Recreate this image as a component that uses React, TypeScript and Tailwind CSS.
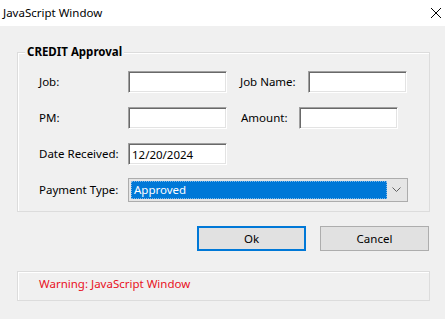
import { useState } from "react";

const inputCls =
  "h-[22px] bg-white border border-t-[#a0a0a0] border-l-[#a0a0a0] border-b-white border-r-white shadow-[inset_1px_1px_0_#696969,inset_-1px_-1px_0_#e3e3e3] px-[3px] text-[11.5px] outline-none text-black";

const App = () => {
  const [job, setJob] = useState("");
  const [jobName, setJobName] = useState("");
  const [pm, setPm] = useState("");
  const [amount, setAmount] = useState("");
  const [date, setDate] = useState("12/20/2024");

  return (
    <div className="w-[445px] h-[319px] bg-[#f0f0f0] text-[11.5px] text-black font-['Noto_Sans',sans-serif] flex flex-col overflow-hidden">
      <div className="h-[26px] bg-white flex items-center justify-between pl-[3px] pr-[3px] shrink-0">
        <span>JavaScript Window</span>
        <svg width="12" height="12" viewBox="0 0 12 12">
          <path d="M1 1 L11 11 M11 1 L1 11" stroke="#000" strokeWidth="1" />
        </svg>
      </div>

      <div className="pl-[17px] pr-[15px] pt-[26px] flex flex-col">
        <div className="relative border border-[#dcdcdc] shadow-[inset_1px_1px_0_#fff] pt-[18px] pb-[9px] pl-[21px] flex flex-col gap-[14px]">
          <span className="absolute left-[7px] top-[-9px] px-[2px] bg-[#f0f0f0] font-bold leading-[16px]">
            CREDIT Approval
          </span>

          <div className="flex items-center">
            <label className="w-[89px]">Job:</label>
            <input className={`${inputCls} w-[99px]`} value={job} onChange={(e) => setJob(e.target.value)} />
            <label className="w-[68px] ml-[13px]">Job Name:</label>
            <input className={`${inputCls} w-[99px]`} value={jobName} onChange={(e) => setJobName(e.target.value)} />
          </div>

          <div className="flex items-center">
            <label className="w-[89px]">PM:</label>
            <input className={`${inputCls} w-[99px]`} value={pm} onChange={(e) => setPm(e.target.value)} />
            <label className="w-[58px] ml-[14px]">Amount:</label>
            <input className={`${inputCls} w-[99px]`} value={amount} onChange={(e) => setAmount(e.target.value)} />
          </div>

          <div className="flex items-center">
            <label className="w-[89px]">Date Received:</label>
            <input className={`${inputCls} w-[99px]`} value={date} onChange={(e) => setDate(e.target.value)} />
          </div>

          <div className="flex items-center mt-[-1px]">
            <label className="w-[89px]">Payment Type:</label>
            <div className="w-[280px] h-[24px] border border-[#acacac] bg-[#e5e5e5] flex items-center p-[2px]">
              <div className="flex-1 h-full bg-[#0078d7] text-white border border-dotted border-[#7fb8e8] flex items-center pl-[2px]">
                Approved
              </div>
              <div className="w-[18px] flex items-center justify-center">
                <svg width="9" height="6" viewBox="0 0 9 6">
                  <path d="M0.5 0.5 L4.5 4.5 L8.5 0.5" fill="none" stroke="#606060" strokeWidth="1" />
                </svg>
              </div>
            </div>
          </div>
        </div>

        <div className="flex justify-end gap-[14px] mt-[14px] pr-[1px]">
          <button className="w-[109px] h-[25px] bg-[#e1e1e1] border-2 border-[#0078d7]">Ok</button>
          <button className="w-[109px] h-[25px] bg-[#e1e1e1] border border-[#adadad]">Cancel</button>
        </div>

        <div className="mt-[20px] h-[30px] border border-[#dcdcdc] shadow-[inset_1px_1px_0_#fff] flex items-center pl-[21px] pb-[4px]">
          <span className="text-[#e81123]">Warning: JavaScript Window</span>
        </div>
      </div>
    </div>
  );
};

export default App;
